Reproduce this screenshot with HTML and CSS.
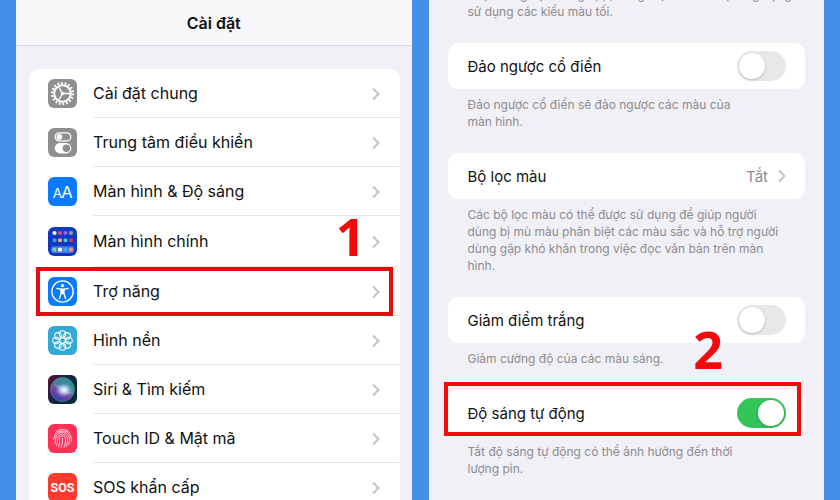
FILE: index.html
```html
<!DOCTYPE html>
<html lang="vi">
<head>
  <meta charset="UTF-8">
  <meta name="viewport" content="width=device-width, initial-scale=1.0">
  <title>Cài đặt</title>
  <link rel="stylesheet" href="styles.css">
</head>
<body>
  <main class="steps">
    <section class="phone">
      <header class="navbar">
        <h1>Cài đặt</h1>
      </header>

      <nav class="menu">
        <a class="menu-item" href="#">
          <svg class="icon" viewBox="0 0 28 28">
            <rect width="28" height="28" rx="6" fill="#8f8f92"/>
            <circle cx="14" cy="14" r="10" fill="none" stroke="#fff" stroke-width="2.4" stroke-dasharray="1.7 1.79"/>
            <circle cx="14" cy="14" r="8" fill="none" stroke="#fff" stroke-width="2"/>
            <path d="M14 14h7.500M14 14l-3.800-6.500M14 14l-3.800 6.500" stroke="#fff" stroke-width="1.300"/>
            <circle cx="14" cy="14" r="1.700" fill="#fff"/>
          </svg>
          <span class="label">Cài đặt chung</span>
          <svg class="chevron" viewBox="0 0 8 14"><path d="M1 1.500l5.500 5.500L1 12.500"/></svg>
        </a>
        <a class="menu-item" href="#">
          <svg class="icon" viewBox="0 0 28 28">
            <rect width="28" height="28" rx="6" fill="#8f8f92"/>
            <rect x="7" y="4.700" width="15" height="7.800" rx="3.900" fill="none" stroke="#fff" stroke-width="1.200"/>
            <circle cx="11" cy="8.600" r="2.700" fill="#fff"/>
            <rect x="6.500" y="14.500" width="16" height="10" rx="5" fill="#fff"/>
            <circle cx="17.800" cy="19.500" r="3.600" fill="#8f8f92"/>
          </svg>
          <span class="label">Trung tâm điều khiển</span>
          <svg class="chevron" viewBox="0 0 8 14"><path d="M1 1.500l5.500 5.500L1 12.500"/></svg>
        </a>
        <a class="menu-item" href="#">
          <svg class="icon" viewBox="0 0 28 28">
            <rect width="28" height="28" rx="6" fill="#0a7aff"/>
            <text x="4.500" y="20" font-size="13" fill="#fff">A</text>
            <text x="12.700" y="20" font-size="16" fill="#fff">A</text>
          </svg>
          <span class="label">Màn hình &amp; Độ sáng</span>
          <svg class="chevron" viewBox="0 0 8 14"><path d="M1 1.500l5.500 5.500L1 12.500"/></svg>
        </a>
        <a class="menu-item tall" href="#">
          <svg class="icon" viewBox="0 0 28 28">
            <rect width="28" height="28" rx="6" fill="#1238c0"/>
            <rect x="3" y="18.500" width="22" height="6.500" rx="2" fill="#4f78dc"/>
            <g fill="#fff">
              <rect x="4.500" y="4" width="3.600" height="3.600" rx="1"/>
              <rect x="9.800" y="4" width="3.600" height="3.600" rx="1" fill="#e64980"/>
              <rect x="15.100" y="4" width="3.600" height="3.600" rx="1" fill="#a860ea"/>
              <rect x="20.400" y="4" width="3.600" height="3.600" rx="1" fill="#7cb894"/>
              <rect x="4.500" y="11" width="3.600" height="3.600" rx="1" fill="#35a2f5"/>
              <rect x="9.800" y="11" width="3.600" height="3.600" rx="1" fill="#f3b452"/>
              <rect x="15.100" y="11" width="3.600" height="3.600" rx="1" fill="#45cfd0"/>
              <rect x="20.400" y="11" width="3.600" height="3.600" rx="1" fill="#d93465"/>
              <rect x="4.500" y="20" width="3.600" height="3.600" rx="1" fill="#65dba0"/>
              <rect x="9.800" y="20" width="3.600" height="3.600" rx="1"/>
              <rect x="15.100" y="20" width="3.600" height="3.600" rx="1" fill="#38aaf8"/>
              <rect x="20.400" y="20" width="3.600" height="3.600" rx="1" fill="#ef957d"/>
            </g>
          </svg>
          <span class="label">Màn hình chính</span>
          <svg class="chevron" viewBox="0 0 8 14"><path d="M1 1.500l5.500 5.500L1 12.500"/></svg>
          <strong class="number number-one">1</strong>
        </a>
        <a class="menu-item marked" href="#">
          <svg class="icon" viewBox="0 0 28 28">
            <rect width="28" height="28" rx="6" fill="#0a7aff"/>
            <circle cx="14" cy="14" r="10.300" fill="none" stroke="#fff" stroke-width="1.300"/>
            <circle cx="14" cy="8.300" r="1.600" fill="#fff"/>
            <path d="M8.500 11l4 .8h3l4-.8M12.600 12v4L11 21M15.400 12v4l1.600 5" fill="none" stroke="#fff" stroke-width="1.300" stroke-linecap="round" stroke-linejoin="round"/>
            <path d="M12.500 11.500h3v5h-3z" fill="#fff"/>
          </svg>
          <span class="label">Trợ năng</span>
          <svg class="chevron" viewBox="0 0 8 14"><path d="M1 1.500l5.500 5.500L1 12.500"/></svg>
        </a>
        <a class="menu-item" href="#">
          <svg class="icon" viewBox="0 0 28 28">
            <rect width="28" height="28" rx="6" fill="#35a9d6"/>
            <g fill="none" stroke="#fff" stroke-width="1">
              <circle cx="14" cy="14" r="2.700"/>
              <circle cx="14" cy="7.800" r="3.200"/>
              <circle cx="18.400" cy="9.600" r="3.200"/>
              <circle cx="20.200" cy="14" r="3.200"/>
              <circle cx="18.400" cy="18.400" r="3.200"/>
              <circle cx="14" cy="20.200" r="3.200"/>
              <circle cx="9.600" cy="18.400" r="3.200"/>
              <circle cx="7.800" cy="14" r="3.200"/>
              <circle cx="9.600" cy="9.600" r="3.200"/>
            </g>
          </svg>
          <span class="label">Hình nền</span>
          <svg class="chevron" viewBox="0 0 8 14"><path d="M1 1.500l5.500 5.500L1 12.500"/></svg>
        </a>
        <a class="menu-item" href="#">
          <svg class="icon" viewBox="0 0 28 28">
            <defs>
              <linearGradient id="siri-bg" x1="0" y1="0" x2="1" y2="0.600">
                <stop offset="0" stop-color="#5c0f38"/>
                <stop offset="0.500" stop-color="#1b2440"/>
                <stop offset="1" stop-color="#072a3c"/>
              </linearGradient>
              <linearGradient id="siri-orb" x1="0.800" y1="0" x2="0.300" y2="1">
                <stop offset="0" stop-color="#1c9a86"/>
                <stop offset="0.450" stop-color="#5878a0"/>
                <stop offset="0.700" stop-color="#7a3c9c"/>
                <stop offset="1" stop-color="#1e48b8"/>
              </linearGradient>
              <radialGradient id="siri-glow">
                <stop offset="0" stop-color="#fff"/>
                <stop offset="0.400" stop-color="#cfe4ff" stop-opacity="0.800"/>
                <stop offset="1" stop-color="#7cc4ff" stop-opacity="0"/>
              </radialGradient>
            </defs>
            <rect width="28" height="28" rx="6" fill="url(#siri-bg)"/>
            <circle cx="14" cy="14" r="11.500" fill="url(#siri-orb)" stroke="#4f8ba0" stroke-width="0.700"/>
            <ellipse cx="15.500" cy="14.500" rx="8.500" ry="7" fill="url(#siri-glow)"/>
            <path d="M6 10c4 0 6 2 9 4.500S21 18 24 17" fill="none" stroke="#fff" stroke-opacity="0.250"/>
          </svg>
          <span class="label">Siri &amp; Tìm kiếm</span>
          <svg class="chevron" viewBox="0 0 8 14"><path d="M1 1.500l5.500 5.500L1 12.500"/></svg>
        </a>
        <a class="menu-item" href="#">
          <svg class="icon" viewBox="0 0 28 28">
            <rect width="28" height="28" rx="6" fill="#fb3158"/>
            <g fill="none" stroke="#ffe3e8" stroke-width="0.900" stroke-linecap="round">
              <path d="M7 8.500C10.500 4 17.500 4 21 8.500"/>
              <path d="M5.500 15c0-11 17-11 17 0v2"/>
              <path d="M6.700 19c1-2 .6-3 .7-5 .6-8 12.600-8 13.200 0 .1 2 0 4-.5 6"/>
              <path d="M8.300 20.500c1.200-2.300.8-4.500 1-6.500.5-5.500 8.900-5.500 9.400 0 .1 3-.1 5-1 7.500"/>
              <path d="M10.200 21.800c1.300-3 .8-5.500 1-7.800.4-3.200 5.200-3.200 5.600 0 .1 3.500-.2 6-1.300 8.700"/>
              <path d="M14 13.800c.2 3.500-.1 6-1.500 8.800"/>
            </g>
          </svg>
          <span class="label">Touch ID &amp; Mật mã</span>
          <svg class="chevron" viewBox="0 0 8 14"><path d="M1 1.500l5.500 5.500L1 12.500"/></svg>
        </a>
        <a class="menu-item" href="#">
          <svg class="icon" viewBox="0 0 28 28">
            <rect width="28" height="28" rx="6" fill="#fb3b2e"/>
            <text class="sos" x="14" y="18.500" text-anchor="middle" fill="#fff">SOS</text>
          </svg>
          <span class="label">SOS khẩn cấp</span>
          <svg class="chevron" viewBox="0 0 8 14"><path d="M1 1.500l5.500 5.500L1 12.500"/></svg>
        </a>
      </nav>
    </section>

    <section class="phone details">
      <p class="note note-cut">và phương tiện trong app, cùng một số các loại ứng dụng<br>sử dụng các kiểu màu tối.</p>

      <div class="card">
        <label for="classic-invert">Đảo ngược cổ điển</label>
        <input class="switch" type="checkbox" id="classic-invert">
      </div>
      <p class="note">Đảo ngược cổ điển sẽ đảo ngược các màu của<br>màn hình.</p>

      <a class="card" href="#">
        <span>Bộ lọc màu</span>
        <span class="value">Tắt
          <svg class="chevron" viewBox="0 0 8 14"><path d="M1 1.500l5.500 5.500L1 12.500"/></svg>
        </span>
      </a>
      <p class="note">Các bộ lọc màu có thể được sử dụng để giúp người<br>dùng bị mù màu phân biệt các màu sắc và hỗ trợ người<br>dùng gặp khó khăn trong việc đọc văn bản trên màn<br>hình.</p>

      <div class="card">
        <label for="white-point">Giảm điểm trắng</label>
        <input class="switch" type="checkbox" id="white-point">
        <strong class="number number-two">2</strong>
      </div>
      <p class="note">Giảm cường độ của các màu sáng.</p>

      <div class="card marked">
        <label for="auto-brightness">Độ sáng tự động</label>
        <input class="switch" type="checkbox" id="auto-brightness" checked>
      </div>
      <p class="note">Tắt độ sáng tự động có thể ảnh hưởng đến thời<br>lượng pin.</p>
    </section>
  </main>
</body>
</html>
```
FILE: styles.css
```css
* {
  margin: 0;
  padding: 0;
  box-sizing: border-box;
}

body {
  font-family: Inter, "Liberation Sans", sans-serif;
  font-size: 16px;
  color: #111;
  background: #468fe9;
  overflow: hidden;
}

a {
  color: inherit;
  text-decoration: none;
}

.steps {
  display: grid;
  grid-template-columns: 1fr 1fr;
  gap: 17px;
  height: 100vh;
  padding: 0 16px;
}

.phone {
  min-width: 0;
  background: #f1f0f6;
  overflow: hidden;
}

.navbar {
  display: flex;
  align-items: center;
  justify-content: center;
  height: 46px;
  background: #f7f7f9;
  border-bottom: 1px solid #d8d8dc;
}

.navbar h1 {
  font-size: 16px;
  font-weight: 600;
}

/* left screen */
.menu {
  margin: 23px 12px 0 13px;
  background: #fff;
  border-radius: 10px;
}

.menu-item {
  position: relative;
  display: flex;
  align-items: center;
  gap: 16px;
  height: 49px;
  padding-left: 19px;
}

.menu-item.tall {
  height: 51px;
}

.icon {
  flex: none;
  width: 29px;
  height: 29px;
}

.icon .sos {
  font-family: Roboto, sans-serif;
  font-size: 12px;
  font-weight: 700;
}

.label {
  flex: 1;
  display: flex;
  align-items: center;
  align-self: stretch;
  border-bottom: 1px solid #e6e6e9;
}

.menu-item .chevron {
  position: absolute;
  right: 20px;
}

.chevron {
  width: 8px;
  height: 14px;
  fill: none;
  stroke: #c2c2c6;
  stroke-width: 2;
}

/* right screen */
.details {
  padding: 0 19px;
  font-size: 15px;
}

.card {
  position: relative;
  display: flex;
  align-items: center;
  justify-content: space-between;
  height: 46px;
  padding: 0 19px 0 20px;
  background: #fff;
  border-radius: 10px;
}

.note {
  padding: 7px 0 0 20px;
  margin-bottom: 23px;
  font-size: 12px;
  line-height: 17px;
  color: #8b8b90;
  white-space: nowrap;
}

.note-cut {
  margin-top: -21px;
}

.value {
  display: flex;
  align-items: center;
  gap: 10px;
  color: #8b8b90;
}

.switch {
  appearance: none;
  width: 49px;
  height: 30px;
  padding: 2px;
  border-radius: 15px;
  background: #e8e8ea;
  cursor: pointer;
}

.switch::before {
  content: "";
  display: block;
  width: 26px;
  height: 26px;
  border-radius: 50%;
  background: #fff;
  box-shadow: 0 1px 3px rgba(0, 0, 0, 0.2);
}

.switch:checked {
  background: #35c459;
}

.switch:checked::before {
  margin-left: auto;
}

/* red step markers */
.marked::after {
  content: "";
  position: absolute;
  inset: 0 7px;
  border: 4px solid #e01010;
  pointer-events: none;
}

.card.marked::after {
  inset: -8px 4px 0 -4px;
  border-color: #f30a0a;
}

.number {
  position: absolute;
  font-family: "Open Sans", sans-serif;
  font-size: 52px;
  font-weight: 700;
  line-height: 52px;
  color: #f30a0a;
}

.number-one {
  right: 34px;
  top: -6px;
}

.number-two {
  right: 82px;
  top: 26px;
}
```
